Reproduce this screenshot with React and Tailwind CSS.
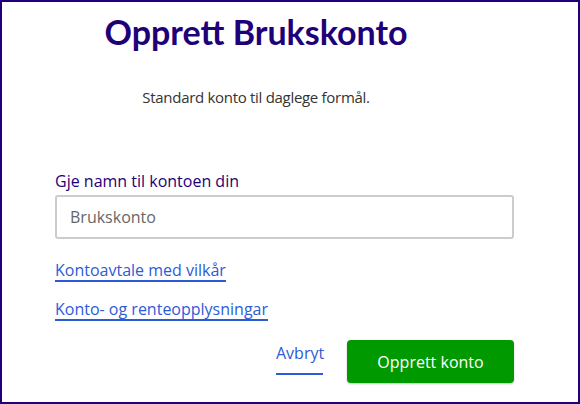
export default function App() {
  return (
    <div
      className="w-[580px] h-[404px] border-2 border-[#1e0078] bg-white overflow-hidden"
      style={{ fontFamily: '"Open Sans", Lato, sans-serif' }}
    >
      <div className="w-[508px] text-center pt-[10px]">
        <h1 className="text-[34px] leading-[40px] font-bold text-[#1e0078]" style={{ fontFamily: 'Lato, sans-serif' }}>Opprett Brukskonto</h1>
        <p className="mt-[35px] text-[15px] leading-[20px] tracking-[-0.3px] text-[#333333]">Standard konto til daglege formål.</p>
      </div>
      <div className="pl-[53px] w-[512px] mt-[64px]">
        <label className="block text-[16px] leading-[20px] text-[#1e0078]">Gje namn til kontoen din</label>
        <div className="mt-[4px] h-[44px] border-2 border-[#cccccc] rounded-[3px] flex items-center pl-[13px] text-[16px] text-[#666666]">
          Brukskonto
        </div>
        <div className="mt-[19px]">
          <a className="inline-block text-[16px] leading-[20px] text-[#2d5bd8] border-b-2 border-[#2d5bd8]">Kontoavtale med vilkår</a>
        </div>
        <div className="mt-[15px]">
          <a className="inline-block text-[16px] leading-[20px] text-[#2d5bd8] border-b-2 border-[#2d5bd8]">Konto- og renteopplysningar</a>
        </div>
        <div className="mt-[19px] flex justify-end items-start gap-[24px]">
          <a className="block w-[47px] h-[35px] text-[16px] leading-[20px] pt-[3px] text-[#2d5bd8] border-b-2 border-[#2d5bd8]">Avbryt</a>
          <button className="w-[167px] h-[43px] bg-[#009a00] rounded-[4px] text-white text-[16px] shadow-[0_1px_2px_rgba(0,0,0,0.25)]">Opprett konto</button>
        </div>
      </div>
    </div>
  );
}
